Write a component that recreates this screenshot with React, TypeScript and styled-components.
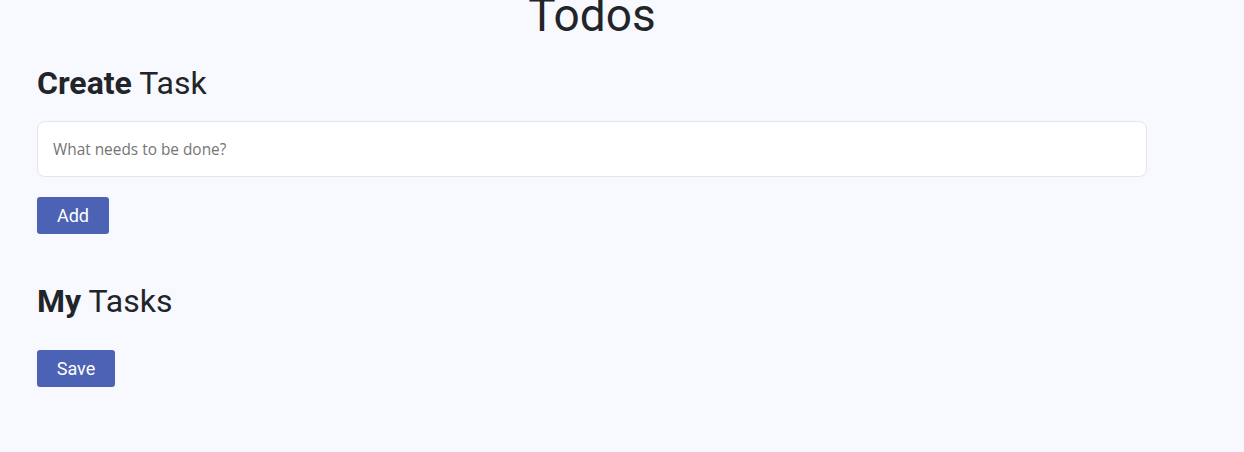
import React from "react";
import styled, { createGlobalStyle } from "styled-components";

const Global = createGlobalStyle`
  html, body { margin: 0; padding: 0; background: #f8f9fe; }
  body { font-family: Roboto, "Liberation Sans", sans-serif; color: #212529; }
`;

const Page = styled.div`
  width: 1110px;
  padding: 0 0 0 37px;
  display: flex;
  flex-direction: column;
`;

const Title = styled.h1`
  margin: -13px 0 0;
  font-size: 46px;
  font-weight: 400;
  line-height: 57px;
  text-align: center;
  color: #212529;
`;

const Heading = styled.h2`
  margin: 0;
  font-size: 32px;
  font-weight: 400;
  line-height: 38px;
  color: #212529;
  b { font-weight: 700; }
`;

const Section = styled.section<{ $top: number }>`
  display: flex;
  flex-direction: column;
  align-items: flex-start;
  margin-top: ${(p) => p.$top}px;
`;

const Input = styled.input`
  box-sizing: border-box;
  width: 100%;
  height: 56px;
  margin-top: 19px;
  padding: 0 15px;
  background: #fff;
  border: 1px solid #e4e4ec;
  border-radius: 8px;
  font-family: "Open Sans", "Noto Sans", sans-serif;
  font-size: 15.4px;
  outline: none;
  &::placeholder { color: #757575; }
`;

const Button = styled.button<{ $w: number; $top: number }>`
  box-sizing: border-box;
  width: ${(p) => p.$w}px;
  height: 37px;
  margin-top: ${(p) => p.$top}px;
  background: #4c62b5;
  color: #fff;
  border: none;
  border-radius: 3px;
  font-family: Roboto, sans-serif;
  font-size: 18px;
  cursor: pointer;
`;

export default function App() {
  return (
    <>
      <Global />
      <Page>
        <Title>Todos</Title>
        <Section $top={20}>
          <Heading><b>Create</b> Task</Heading>
          <Input placeholder="What needs to be done?" />
          <Button $w={72} $top={20}>Add</Button>
        </Section>
        <Section $top={48}>
          <Heading><b>My</b> Tasks</Heading>
          <Button $w={78} $top={30}>Save</Button>
        </Section>
      </Page>
    </>
  );
}
